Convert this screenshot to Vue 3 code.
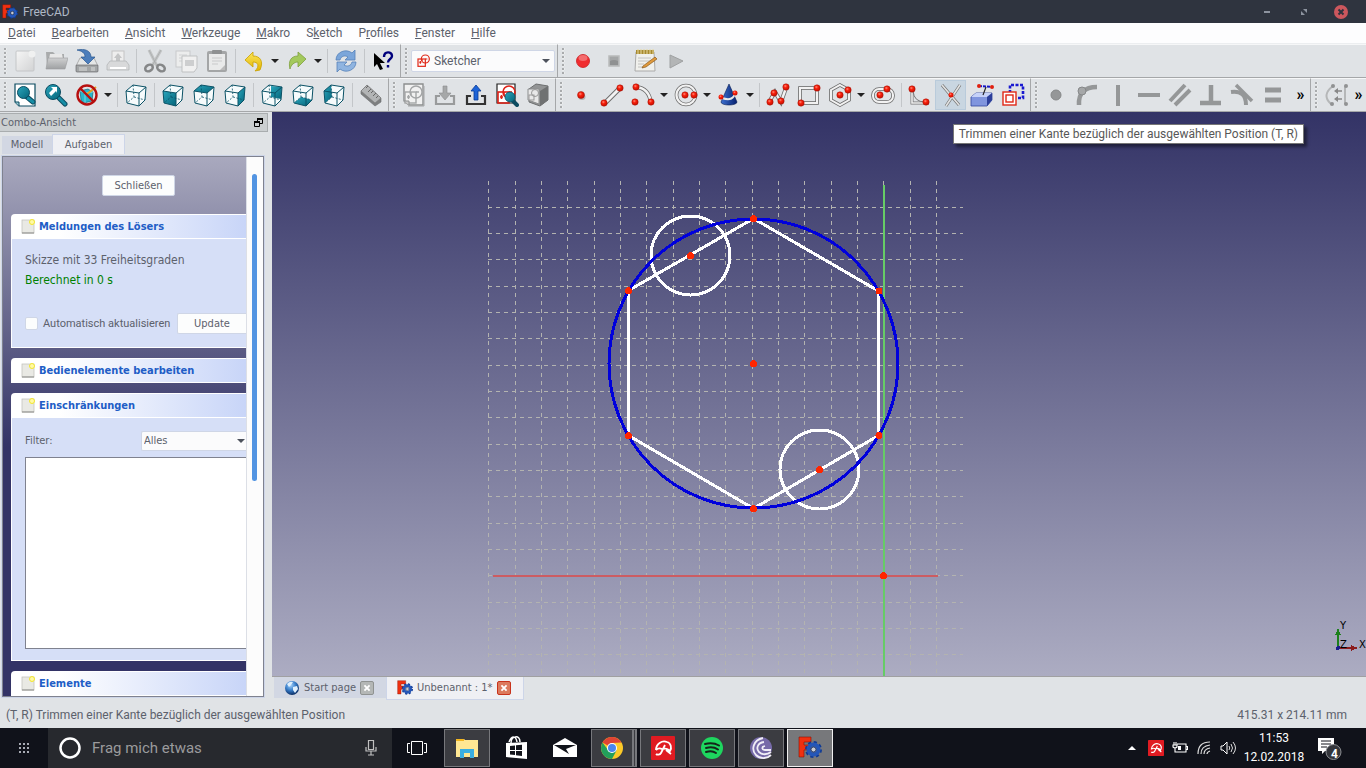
<script setup>
import { ref } from 'vue'

const tool = (icon, label, extra = {}) => ({ icon, label, ...extra })
const sep = { kind: 'sep' }
const drop = (label) => ({ kind: 'drop', label })
const more = { kind: 'more', label: 'Weitere Werkzeuge' }

const menus = [
  ['', 'D', 'atei'],
  ['', 'B', 'earbeiten'],
  ['', 'A', 'nsicht'],
  ['', 'W', 'erkzeuge'],
  ['', 'M', 'akro'],
  ['S', 'k', 'etch'],
  ['P', 'r', 'ofiles'],
  ['', 'F', 'enster'],
  ['', 'H', 'ilfe'],
]

const rows = [
  [
    {
      name: 'Datei',
      items: [
        tool('new', 'Neu'), tool('open', 'Öffnen'), tool('save', 'Speichern'), tool('print', 'Drucken'), sep,
        tool('cut', 'Ausschneiden'), tool('copy', 'Kopieren'), tool('paste', 'Einfügen'), sep,
        tool('undo', 'Rückgängig'), drop('Rückgängig-Liste'), tool('redo', 'Wiederholen'), drop('Wiederholen-Liste'), sep,
        tool('refresh', 'Aktualisieren'), sep, tool('whatsthis', 'Direkthilfe'),
      ],
    },
    { name: 'Arbeitsbereich', items: [{ kind: 'workbench' }] },
    {
      name: 'Makro',
      grow: true,
      items: [tool('record', 'Makro aufzeichnen'), tool('stop', 'Stopp'), tool('macros', 'Makros'), tool('play', 'Ausführen')],
    },
  ],
  [
    {
      name: 'Ansicht',
      items: [
        tool('fit', 'Alles einpassen'), tool('fitsel', 'Auswahl einpassen'), tool('style', 'Darstellung'), drop('Darstellungsart'), sep,
        tool('cube-axo', 'Axonometrisch'), sep,
        tool('cube-front', 'Vorne'), tool('cube-top', 'Oben'), tool('cube-right', 'Rechts'), sep,
        tool('cube-rear', 'Hinten'), tool('cube-bottom', 'Unten'), tool('cube-left', 'Links'), sep,
        tool('ruler', 'Abstand messen'),
      ],
    },
    {
      name: 'Skizze',
      items: [
        tool('sketch-new', 'Neue Skizze'), tool('sketch-edit', 'Skizze bearbeiten'), tool('sketch-leave', 'Skizze verlassen'),
        tool('sketch-view', 'Skizze anzeigen'), tool('sketch-map', 'Skizze zuordnen'),
      ],
    },
    {
      name: 'Geometrie',
      items: [
        tool('point', 'Punkt'), tool('line', 'Linie'), tool('arc', 'Bogen'), drop('Bögen'),
        tool('circle', 'Kreis'), drop('Kreise'), tool('conic', 'Kegelschnitt'), drop('Kegelschnitte'), sep,
        tool('polyline', 'Linienzug'), tool('rect', 'Rechteck'), tool('polygon', 'Polygon'), drop('Polygone'), tool('slot', 'Langloch'), sep,
        tool('fillet', 'Verrundung'), tool('trim', 'Trimmen', { active: true }), tool('external', 'Externe Geometrie'), tool('construction', 'Hilfsgeometrie'),
      ],
    },
    {
      name: 'Einschränkungen',
      grow: true,
      items: [
        tool('c-point', 'Koinzidenz'), tool('c-curve', 'Punkt auf Objekt'), tool('c-vert', 'Vertikal'), tool('c-hori', 'Horizontal'),
        tool('c-para', 'Parallel'), tool('c-perp', 'Rechtwinklig'), tool('c-tang', 'Tangential'), tool('c-equal', 'Gleich'), more,
      ],
    },
    { name: 'Hilfsmittel', items: [tool('sym', 'Elemente auswählen'), more] },
  ],
]

// Corners of the small view cube, shared by all view icons
const faces = {
  axo: '',
  front: '2,8 15,10 15,23 3,20',
  top: '2,8 9,2 22,4 15,10',
  right: '15,10 22,4 21,17 15,23',
  rear: '11,3 22,4 21,16 11,14',
  bottom: '3,20 10,14 21,17 15,23',
  left: '2,8 9,2 10,14 3,20',
}

const step = 26.33
const columns = Array.from({ length: 18 }, (_, i) => Math.floor(488.9 + i * step) + 0.5)
const lines = Array.from({ length: 18 }, (_, i) => Math.floor(207.2 + i * step) + 0.5)

const points = [
  [753.5, 218.5], [879, 291], [879, 435.5], [753.5, 508.5], [628.5, 435.5], [628.5, 290.5],
  [753.5, 363.5], [690.5, 255.5], [819.5, 469.5], [883.5, 575.5],
]

const apps = [
  { icon: 'explorer', label: 'Explorer', state: 'open' },
  { icon: 'store', label: 'Store', state: '' },
  { icon: 'mail', label: 'Mail', state: '' },
  { icon: 'chrome', label: 'Chrome', state: 'open stacked' },
  { icon: 'avira', label: 'Avira', state: 'open' },
  { icon: 'spotify', label: 'Spotify', state: 'open' },
  { icon: 'torrent', label: 'BitTorrent', state: 'open' },
  { icon: 'freecad', label: 'FreeCAD', state: 'open current' },
]

const tray = [
  ['chevron', 'Ausgeblendete Symbole'],
  ['avira', 'Avira'],
  ['battery', 'Akku'],
  ['wifi', 'WLAN'],
  ['volume', 'Lautstärke'],
]

const workbench = ref('Sketcher')
const filter = ref('Alles')
const autoUpdate = ref(false)
const query = ref('')
</script>

<template>
  <div class="screen">
    <svg class="sprite" width="0" height="0" aria-hidden="true">
      <defs>
        <radialGradient id="g-ball" cx=".4" cy=".35" r=".65">
          <stop offset="0" stop-color="#ff8a78" /><stop offset=".4" stop-color="#f8200c" /><stop offset="1" stop-color="#c80e00" />
        </radialGradient>
        <linearGradient id="g-page" x1="0" y1="0" x2="1" y2="1">
          <stop offset="0" stop-color="#f6f6f6" /><stop offset="1" stop-color="#d2d3d4" />
        </linearGradient>
        <linearGradient id="g-grey" x1="0" y1="0" x2="0" y2="1">
          <stop offset="0" stop-color="#cfd0d1" /><stop offset="1" stop-color="#9fa1a3" />
        </linearGradient>
        <linearGradient id="g-teal" x1="0" y1="0" x2="1" y2="1">
          <stop offset="0" stop-color="#2ba6bc" /><stop offset="1" stop-color="#04647a" />
        </linearGradient>
        <linearGradient id="g-yellow" x1="0" y1="0" x2="0" y2="1">
          <stop offset="0" stop-color="#fbe55c" /><stop offset="1" stop-color="#e2b400" />
        </linearGradient>
        <linearGradient id="g-cone" x1="0" y1="0" x2="1" y2="0">
          <stop offset="0" stop-color="#3c70d0" /><stop offset="1" stop-color="#06206e" />
        </linearGradient>
        <radialGradient id="g-globe" cx=".4" cy=".3" r=".7">
          <stop offset="0" stop-color="#a8d4fb" /><stop offset=".5" stop-color="#3a80cc" /><stop offset="1" stop-color="#0c2f66" />
        </radialGradient>
        <g id="ball"><circle r="3.200" fill="url(#g-ball)" stroke="#a01408" stroke-width=".5" /></g>
        <g id="sketch" fill="none">
          <rect x="3" y="9" width="11" height="11" /><circle cx="14" cy="9" r="6" /><path d="M5 14h3M6.500 12v4M9 9v3M14 9h3" />
        </g>
      </defs>

      <symbol v-for="(pts, face) in faces" :id="'cube-' + face" :key="face" viewBox="0 0 24 24">
        <path d="M2 8 9 2 22 4 21 17 15 23 3 20z" fill="#f6fbfc" />
        <polygon :points="pts" fill="url(#g-teal)" />
        <path d="M9 2 10 14 3 20M10 14 21 17" fill="none" stroke="#0b5266" stroke-width=".8" stroke-dasharray="2 1.500" />
        <path d="M2 8 9 2 22 4 21 17 15 23 3 20zM2 8 15 10 22 4M15 10V23" fill="none" stroke="#0b5266" stroke-width="1" stroke-linejoin="round" />
      </symbol>

      <symbol id="new" viewBox="0 0 24 24">
        <rect x="3" y="2" width="18" height="20" rx="1" fill="url(#g-page)" stroke="#c4c6c8" />
        <circle cx="19" cy="5" r="3.500" fill="#f0f1f1" />
      </symbol>
      <symbol id="open" viewBox="0 0 24 24">
        <path d="M2 3h7l2 2h9v14H3z" fill="#a9abac" /><path d="M6 5h12l1 5H5z" fill="#e8e8e8" />
        <path d="M4 9h20l-3 11H2z" fill="url(#g-grey)" stroke="#9a9c9d" stroke-width=".6" />
      </symbol>
      <symbol id="save" viewBox="0 0 24 24">
        <path d="M5 9h14l4 8H1z" fill="#e4e6e6" stroke="#888" stroke-width=".6" />
        <rect x="1" y="16" width="22" height="7" rx="1" fill="#a3a6a7" stroke="#5a5d5e" stroke-width=".6" />
        <path d="M4 19h8M4 21h8M17 18v4M19 18v4" stroke="#d9dada" />
        <path d="M2 1C10-1 16 2 16 8h4l-7 7-7-7h4C10 4 7 2 2 1z" fill="#4b7dbb" stroke="#2a5890" stroke-width=".7" />
      </symbol>
      <symbol id="print" viewBox="0 0 24 24">
        <rect x="6" y="2" width="12" height="12" fill="#eee" stroke="#c4c4c4" /><path d="M12 4l4 5h-2v3h-4V9H8z" fill="#c4c5c6" />
        <path d="M4 12h16l3 4v5H1v-5z" fill="#d8d9da" stroke="#b4b6b7" stroke-width=".8" /><path d="M4 19h16" stroke="#fff" stroke-width="2" />
      </symbol>
      <symbol id="cut" viewBox="0 0 24 24">
        <path d="M6 1 14 17M18 1 9 17" stroke="#c3c5c6" stroke-width="3" /><path d="M6 1 14 17M18 1 9 17" stroke="#a0a2a3" stroke-width=".6" />
        <g fill="none" stroke="#858788" stroke-width="2.500"><ellipse cx="6" cy="19" rx="4" ry="3" transform="rotate(-30 6 19)" /><ellipse cx="18" cy="19" rx="4" ry="3" transform="rotate(30 18 19)" /></g>
      </symbol>
      <symbol id="copy" viewBox="0 0 24 24">
        <rect x="2" y="2" width="14" height="16" fill="#eceded" stroke="#c8cacb" /><path d="M5 6h8M5 9h8M5 12h5" stroke="#d0d1d2" />
        <path d="M8 7h15v12l-3 4H8z" fill="#f0f0f0" stroke="#bfc1c2" /><rect x="11" y="11" width="9" height="6" fill="#cdcecf" />
      </symbol>
      <symbol id="paste" viewBox="0 0 24 24">
        <rect x="2" y="2" width="20" height="21" rx="2" fill="#a4a6a7" /><rect x="4" y="5" width="16" height="16" fill="#e9eaea" />
        <path d="M7 9h10M7 12h10M7 15h6" stroke="#c8c9ca" /><rect x="7" y="1" width="10" height="4" rx="1" fill="#8f9192" /><path d="m15 21 5-5v5z" fill="#bbb" />
      </symbol>
      <symbol id="undo" viewBox="0 0 24 24">
        <path d="M3 11 11 3v4c7 0 11 5 7 14l-5 1c5-5 3-9-2-9v5z" fill="url(#g-yellow)" stroke="#c9a100" stroke-width=".8" stroke-linejoin="round" />
      </symbol>
      <symbol id="redo" viewBox="0 0 24 24">
        <path d="M21 10 13 3v4C6 7 3 12 5 20c1-4 4-7 8-7v5z" fill="#a3c95c" stroke="#7da03c" stroke-width=".8" stroke-linejoin="round" />
      </symbol>
      <symbol id="refresh" viewBox="0 0 24 24">
        <path d="M2 11C2 3 12-1 18 4l3-3v10h-10l3-3C11 6 7 7 6 11z" fill="#7ba6da" stroke="#5681b9" stroke-width=".8" />
        <path d="M22 13c0 8-10 12-16 7l-3 3V13h10l-3 3c3 2 7 1 8-3z" fill="#8fb4e0" stroke="#5681b9" stroke-width=".8" />
      </symbol>
      <symbol id="whatsthis" viewBox="0 0 24 24">
        <path d="M3 4v14l3-3 3 6 3-1-3-6h5z" fill="#000" /><path d="M13 8c0-6 8-6 8-1 0 3-4 3-4 6.500M17 16v2.500" fill="none" stroke="#00007c" stroke-width="2.400" />
      </symbol>
      <symbol id="record" viewBox="0 0 24 24"><circle cx="12" cy="12" r="6.500" fill="#f02d30" stroke="#cc1a1e" stroke-width=".8" /><ellipse cx="12" cy="9" rx="4.500" ry="3" fill="#fff" opacity=".3" /></symbol>
      <symbol id="stop" viewBox="0 0 24 24"><rect x="7" y="7" width="10" height="10" fill="#a4a6a7" stroke="#b8babb" stroke-width="1.500" /><path d="M8 12q4-2 8 0v4H8z" fill="#8f9192" /></symbol>
      <symbol id="macros" viewBox="0 0 24 24">
        <path d="M3 3h18l1 19H2z" fill="#f0f0ec" stroke="#aaa" /><path d="M3 1h18v4H3z" fill="#a78a2f" /><path d="M5 0v5M8 0v5M11 0v5M14 0v5M17 0v5M20 0v5" stroke="#e8d9a0" />
        <path d="M5 9h13M5 12h13M5 15h6M5 18h6" stroke="#b5b5b5" stroke-width=".8" /><path d="m10 17 12-9 2 2-11 8-4 1z" fill="#e09a3c" stroke="#7a4a10" stroke-width=".6" />
      </symbol>
      <symbol id="play" viewBox="0 0 24 24"><path d="M6 6v13l13-7z" fill="#b3b5b6" stroke="#9fa1a2" /></symbol>

      <symbol id="fit" viewBox="0 0 24 24">
        <path d="M2 1h20v22H6l-4-4z" fill="#fff" stroke="#0b4b60" stroke-width="1.200" /><path d="M2 19h4v4" fill="#9ccbd6" stroke="#0b4b60" />
        <path d="m14 14 6 5" stroke="#0b4b60" stroke-width="5" stroke-linecap="round" /><path d="m15 15 5 4" stroke="#178ea6" stroke-width="3" stroke-linecap="round" />
        <circle cx="10.500" cy="9.500" r="6" fill="url(#g-teal)" stroke="#0b4b60" />
      </symbol>
      <symbol id="fitsel" viewBox="0 0 24 24">
        <path d="m14 14 7 7" stroke="#0b4b60" stroke-width="5" stroke-linecap="round" /><path d="m15 15 6 6" stroke="#178ea6" stroke-width="3" stroke-linecap="round" />
        <circle cx="9" cy="9" r="7.500" fill="url(#g-teal)" stroke="#0b4b60" /><path d="M13 4H7l2 2-4 4 2 3 5-5 1 2z" fill="#fff" />
      </symbol>
      <symbol id="style" viewBox="0 0 24 24">
        <path d="M5 8 13 6 18 9 17 18 9 20 6 17z" fill="#27b6cb" stroke="#0b5266" stroke-width=".6" /><path d="m5 8 5 2v10M10 10l8-1" fill="none" stroke="#7bd4e2" />
        <path d="m12 11 9-7" stroke="#e8a020" stroke-width="2" /><circle cx="12" cy="12" r="9.500" fill="none" stroke="#b70f0f" stroke-width="2.400" /><path d="M5 5 19 19" stroke="#b70f0f" stroke-width="2.400" />
      </symbol>
      <symbol id="ruler" viewBox="0 0 24 24">
        <path d="M2 8 8 2 22 15v4l-6 4L2 11z" fill="#7d7f80" stroke="#6a6c6d" stroke-width=".6" /><path d="M2 8 8 2l14 13-6 5z" fill="#b2b4b5" stroke="#777" stroke-width=".6" />
        <path d="m9 3-2 2M12 6l-3 3M14 8l-2 2M17 10l-3 3M19 13l-2 2" stroke="#666" />
      </symbol>

      <symbol id="sketch-new" viewBox="0 0 24 24">
        <path d="M2 1h19v21H7l-5-4z" fill="#f1f1f1" stroke="#8c8e8f" stroke-width="1.400" /><path d="M22 3v20H6" fill="none" stroke="#a4a6a7" />
        <use href="#sketch" stroke="#a3a5a6" stroke-width="1.400" /><path d="M2 18h5v4" fill="#ccc" stroke="#8c8e8f" />
      </symbol>
      <symbol id="sketch-edit" viewBox="0 0 24 24">
        <path d="M7 13H3v8h18v-8h-4" fill="none" stroke="#999b9c" stroke-width="2.200" /><path d="M10 3h4v7h4l-6 7-6-7h4z" fill="#a6a8a9" stroke="#8a8c8d" stroke-width=".6" />
      </symbol>
      <symbol id="sketch-leave" viewBox="0 0 24 24">
        <path d="M7 13H3v8h18v-8h-4" fill="none" stroke="#333" stroke-width="2.200" /><path d="M12 2 17 8h-3v9h-4V8H7z" fill="#1c63d8" stroke="#093a94" stroke-width=".8" />
      </symbol>
      <symbol id="sketch-view" viewBox="0 0 24 24">
        <path d="M2 1h18v19H2z" fill="#fff" stroke="#222" stroke-width="1.200" /><use href="#sketch" stroke="#dd2218" stroke-width="1.600" />
        <path d="m17 17 5 5" stroke="#0b4b60" stroke-width="4" stroke-linecap="round" /><circle cx="15" cy="14" r="5" fill="url(#g-teal)" stroke="#0b5266" stroke-width=".8" />
      </symbol>
      <symbol id="sketch-map" viewBox="0 0 24 24">
        <path d="M3 6 10 1l12 2v14l-8 6-11-4z" fill="#929495" stroke="#6d6f70" /><path d="m14 8 8-5v14l-8 6z" fill="#6f7172" />
        <path d="M2 6h11v15l-11-4z" fill="#e8e8e8" stroke="#8c8e8f" /><rect x="3" y="12" width="5" height="5" fill="none" stroke="#999" /><circle cx="9" cy="10" r="3.500" fill="none" stroke="#999" />
      </symbol>

      <symbol id="point" viewBox="0 0 24 24"><ellipse cx="13" cy="14" rx="3.500" ry="3" fill="#888" opacity=".5" /><circle cx="12" cy="12" r="3.500" fill="url(#g-ball)" stroke="#a01408" stroke-width=".5" /></symbol>
      <symbol id="line" viewBox="0 0 24 24">
        <path d="M5 20 20 5" stroke="#6c6c6c" stroke-width="5" /><path d="M5 20 20 5" stroke="#f2f2f2" stroke-width="3" /><use href="#ball" x="4" y="20" /><use href="#ball" x="20" y="5" />
      </symbol>
      <symbol id="arc" viewBox="0 0 24 24">
        <path d="M5 4q13 1 15 16" fill="none" stroke="#6c6c6c" stroke-width="4" /><path d="M5 4q13 1 15 16" fill="none" stroke="#f2f2f2" stroke-width="2.400" />
        <use href="#ball" x="5" y="4" /><use href="#ball" x="4" y="19" /><use href="#ball" x="20" y="19" />
      </symbol>
      <symbol id="circle" viewBox="0 0 24 24">
        <circle cx="12" cy="12" r="9.500" fill="none" stroke="#6c6c6c" stroke-width="3.600" /><circle cx="12" cy="12" r="9.500" fill="none" stroke="#f2f2f2" stroke-width="2.200" />
        <use href="#ball" x="11" y="12" /><use href="#ball" x="20" y="12" />
      </symbol>
      <symbol id="conic" viewBox="0 0 24 24">
        <path d="M12 1 20 19c0 4-16 4-16 0z" fill="url(#g-cone)" stroke="#061c52" stroke-width=".6" /><path d="M5 15q12 4 13-6" fill="none" stroke="#e8e8e8" stroke-width="2" />
        <circle cx="4" cy="14" r="2.500" fill="url(#g-ball)" /><circle cx="18" cy="10" r="2.500" fill="url(#g-ball)" />
      </symbol>
      <symbol id="polyline" viewBox="0 0 24 24">
        <path d="M3 19 9 9l6 10 5-14" fill="none" stroke="#6c6c6c" stroke-width="4" /><path d="M3 19 9 9l6 10 5-14" fill="none" stroke="#f2f2f2" stroke-width="2.400" />
        <use href="#ball" x="4" y="19" /><use href="#ball" x="8" y="10" /><use href="#ball" x="15" y="18" /><use href="#ball" x="20" y="4" />
      </symbol>
      <symbol id="rect" viewBox="0 0 24 24">
        <rect x="3" y="5" width="17" height="15" fill="none" stroke="#6c6c6c" stroke-width="3.600" /><rect x="3" y="5" width="17" height="15" fill="none" stroke="#f2f2f2" stroke-width="2" />
        <use href="#ball" x="4" y="20" /><use href="#ball" x="20" y="5" />
      </symbol>
      <symbol id="polygon" viewBox="0 0 24 24">
        <path d="M12 2 21 7v10l-9 5-9-5V7z" fill="none" stroke="#6c6c6c" stroke-width="3.600" /><path d="M12 2 21 7v10l-9 5-9-5V7z" fill="none" stroke="#f2f2f2" stroke-width="2" />
        <use href="#ball" x="12" y="12" /><use href="#ball" x="20" y="7" />
      </symbol>
      <symbol id="slot" viewBox="0 0 24 24">
        <rect x="2" y="6" width="20" height="13" rx="6" fill="none" stroke="#6c6c6c" stroke-width="3.600" /><rect x="2" y="6" width="20" height="13" rx="6" fill="none" stroke="#f2f2f2" stroke-width="2" />
        <use href="#ball" x="9" y="12" /><use href="#ball" x="16" y="6" />
      </symbol>
      <symbol id="fillet" viewBox="0 0 24 24">
        <path d="M4 4v16h17" fill="none" stroke="#777" stroke-width="3" /><path d="M4 4v16h17" fill="none" stroke="#eee" stroke-width="1.600" /><path d="M5 8q1 11 12 11" fill="none" stroke="#777" />
        <use href="#ball" x="4" y="6" /><use href="#ball" x="18" y="19" />
      </symbol>
      <symbol id="trim" viewBox="0 0 24 24">
        <path d="M3 2 20 22M21 2 7 23" stroke="#777" stroke-width="3" /><path d="M3 2 20 22M21 2 7 23" stroke="#e2e2e2" stroke-width="1.600" /><circle cx="12" cy="12" r="2.500" fill="url(#g-ball)" />
      </symbol>
      <symbol id="external" viewBox="0 0 24 24">
        <path d="M1 14 6 10h16v7l-5 6H1z" fill="#8095de" stroke="#3348a0" stroke-width=".8" /><path d="M1 14 6 10h16l-5 4z" fill="#c6d2f8" /><path d="M17 14l5-4v7l-5 6z" fill="#2c3f9a" />
        <path d="M9 3l13 1" stroke="#1414c8" stroke-width="2" stroke-dasharray="3 1" /><path d="m16 4-3 8" stroke="#222" stroke-width="1.200" /><circle cx="9" cy="3" r="2" fill="#e02010" /><circle cx="22" cy="4" r="2" fill="#e02010" />
      </symbol>
      <symbol id="construction" viewBox="0 0 24 24">
        <path d="M9 10V2h13v13h-6" fill="none" stroke="#1a1ad0" stroke-width="2.600" stroke-dasharray="3 1.500" />
        <rect x="2" y="9" width="13" height="13" fill="#fff" stroke="#e02818" stroke-width="1.400" /><rect x="5" y="12" width="7" height="7" fill="none" stroke="#e02818" stroke-width="1.400" />
      </symbol>

      <symbol id="c-point" viewBox="0 0 24 24"><circle cx="12" cy="12" r="5" fill="#959798" stroke="#868889" /></symbol>
      <symbol id="c-curve" viewBox="0 0 24 24"><path d="M4 22Q3 4 22 4" fill="none" stroke="#959798" stroke-width="4.500" /><circle cx="7" cy="8" r="4" fill="#a5a7a8" stroke="#868889" /></symbol>
      <symbol id="c-vert" viewBox="0 0 24 24"><path d="M12 2v21" stroke="#959798" stroke-width="4" /></symbol>
      <symbol id="c-hori" viewBox="0 0 24 24"><path d="M1 12h22" stroke="#959798" stroke-width="4" /></symbol>
      <symbol id="c-para" viewBox="0 0 24 24"><path d="M2 18 17 2M7 22 22 7" stroke="#959798" stroke-width="4" /></symbol>
      <symbol id="c-perp" viewBox="0 0 24 24"><path d="M12 2v17M1 20h21" fill="none" stroke="#959798" stroke-width="4.500" /></symbol>
      <symbol id="c-tang" viewBox="0 0 24 24"><path d="M6 2 22 18" stroke="#959798" stroke-width="3.500" /><path d="M1 9q15-2 15 13" fill="none" stroke="#959798" stroke-width="4" /></symbol>
      <symbol id="c-equal" viewBox="0 0 24 24"><path d="M4 7h16M4 17h16" stroke="#959798" stroke-width="5" /></symbol>
      <symbol id="sym" viewBox="0 0 24 24">
        <path d="M9 3Q-3 12 7 21M21 3v18" fill="none" stroke="#b5b7b8" stroke-width="2" /><g fill="#909293"><circle cx="9" cy="3" r="2" /><circle cx="8" cy="21" r="2" /><circle cx="22" cy="3" r="2" /><circle cx="22" cy="21" r="2" /></g>
        <path d="M18 8h-5M18 16h-5" stroke="#888" stroke-width="1.600" /><path d="m14 5-4 3 4 3zM14 13l-4 3 4 3z" fill="#888" />
      </symbol>

      <symbol id="freecad" viewBox="0 0 24 24">
        <path d="M1 1h12v5H6v3h6v5H6v7H1z" fill="#f03010" stroke="#8a1204" stroke-width=".6" />
        <circle cx="15.500" cy="13.500" r="7" fill="none" stroke="#0f3a94" stroke-width="3" stroke-dasharray="3 2.500" />
        <circle cx="15.500" cy="13.500" r="5" fill="none" stroke="#2456b8" stroke-width="4" /><circle cx="15.500" cy="13.500" r="2.500" fill="#c9ccd2" stroke="#0b2560" stroke-width=".8" />
      </symbol>
      <symbol id="globe" viewBox="0 0 16 16">
        <circle cx="8" cy="8" r="7" fill="url(#g-globe)" /><path d="M3 4q3-3 6-2l-2 3-2 2zM9 7l4-1 1 3-3 4-2-3z" fill="#e0f0fd" />
      </symbol>
      <symbol id="closetab" viewBox="0 0 14 14"><path d="m4 4 6 6M10 4l-6 6" stroke="#fff" stroke-width="2.200" /></symbol>
      <symbol id="note" viewBox="0 0 14 15">
        <rect x="1" y="1" width="12" height="13" fill="#e9e9e4" stroke="#c4c4be" stroke-width=".8" /><path d="M1 14h12" stroke="#8b8b88" /><circle cx="11" cy="3" r="2.500" fill="#fff9a8" stroke="#f4e62c" />
      </symbol>

      <symbol id="explorer" viewBox="0 0 24 24"><path d="M1 3h8l1 1h13v17H1z" fill="#ffe793" /><path d="M1 3h8v2H1z" fill="#f3b620" /><path d="M5 13h14v9h-4v-5h-6v5H5z" fill="#3aaee0" /></symbol>
      <symbol id="store" viewBox="0 0 24 24">
        <path d="M2 7 23 6v17L2 21z" fill="#fff" /><path d="M7 7c0-7 9-9 9-1M5 6C8-1 12 0 13 6" fill="none" stroke="#fff" stroke-width="1.500" /><path d="m6 10 5-.6V14H6zM12 9.300l6-.6V14h-6zM6 15h5v4l-5-.6zM12 15h6v5l-6-.7z" fill="#11131a" />
      </symbol>
      <symbol id="mail" viewBox="0 0 24 24"><path d="M0 9 12 2l12 7v12H0z" fill="#fff" /><path d="M1 9h22l-10 4 3 5z" fill="#11131a" /></symbol>
      <symbol id="chrome" viewBox="0 0 24 24">
        <circle cx="12" cy="12" r="11" fill="#fbc928" /><path d="M12 12 2.500 6.500A11 11 0 0 1 21.500 6.500L12 7z" fill="#df4434" /><path d="M2.500 6.500A11 11 0 0 0 12 23l4.500-8.500L12 12l-4 2z" fill="#22a05b" />
        <circle cx="12" cy="12" r="5" fill="#fff" /><circle cx="12" cy="12" r="4" fill="#4a86ee" />
      </symbol>
      <symbol id="avira" viewBox="0 0 24 24">
        <rect width="24" height="24" rx="1" fill="#e01b22" />
        <path d="M5 14C5 8 11 4 16 6c4 1 5 6 3 9-2-2-4-3-6-2M5 14c2-2 4-2 6-1M14 9l-4 8c-1 2-4 2-5 1M15 14l5 4" fill="none" stroke="#fff" stroke-width="1.800" stroke-linejoin="round" />
      </symbol>
      <symbol id="spotify" viewBox="0 0 24 24"><circle cx="12" cy="12" r="11" fill="#1ed65f" /><path d="M5 8q8-2 14 1.500M6 12q7-2 12 1.500M6 16q6-2 10 1" fill="none" stroke="#14251a" stroke-width="2" stroke-linecap="round" /></symbol>
      <symbol id="torrent" viewBox="0 0 24 24">
        <circle cx="12" cy="12" r="11" fill="#766aa8" /><path d="M14 2C4 4 2 14 7 19s12 3 15 0M15 6C8 7 7 13 10 16s8 3 12 0M16 10c-4 1-3 4 0 4h6" fill="none" stroke="#f0eef6" stroke-width="1.800" />
      </symbol>
      <symbol id="chevron" viewBox="0 0 16 16"><path d="m4 10 4-4 4 4z" fill="#fff" /></symbol>
      <symbol id="battery" viewBox="0 0 16 16"><path d="M5 4h9v8H5M14 6.500h1.500v3H14M2 2v3M4 2v3M1 5h4v2q-2 2-4 0zM3 8v4h3" fill="none" stroke="#fff" stroke-width="1.100" /><path d="M6 6h3v4H6z" fill="#fff" /></symbol>
      <symbol id="wifi" viewBox="0 0 16 16"><path d="M2 14Q2 2 14 2M5 14q0-8 9-9M8 14q0-5 6-6M11 14q0-2 3-3" fill="none" stroke="#ddd" stroke-width="1.200" /></symbol>
      <symbol id="volume" viewBox="0 0 16 16"><path d="M1 6h2l4-4v12l-4-4H1z" fill="none" stroke="#fff" /><path d="M9 6q1.500 2 0 4M11 4q3 4 0 8M13 2q5 6 0 12" fill="none" stroke="#ddd" /></symbol>
    </svg>

    <header class="titlebar">
      <svg class="i16"><use href="#freecad" /></svg>
      <h1>FreeCAD</h1>
      <button type="button" aria-label="Minimieren"><svg class="i16" viewBox="0 0 16 16"><path d="M5 7h6v2H5z" fill="#8d939f" /></svg></button>
      <button type="button" aria-label="Wiederherstellen"><svg class="i16" viewBox="0 0 16 16"><path d="M7 5h4v4zM5 7v4h4z" fill="#8d939f" /></svg></button>
      <button type="button" aria-label="Schließen">
        <svg class="i16" viewBox="0 0 16 16"><circle cx="8" cy="8" r="7" fill="#cc575d" /><path d="m5.500 5.500 5 5M10.500 5.500l-5 5" stroke="#2f343f" stroke-width="2" /></svg>
      </button>
    </header>

    <nav class="menubar">
      <a v-for="m in menus" :key="m[2]" href="#">{{ m[0] }}<u>{{ m[1] }}</u>{{ m[2] }}</a>
    </nav>

    <div v-for="(row, r) in rows" :key="r" class="toolrow">
      <div v-for="bar in row" :key="bar.name" class="toolbar" :class="{ grow: bar.grow }" role="toolbar" :aria-label="bar.name">
        <span class="handle" />
        <template v-for="(item, i) in bar.items" :key="i">
          <span v-if="item.kind === 'sep'" class="sep" />
          <button v-else-if="item.kind === 'drop'" type="button" class="drop" :aria-label="item.label"><span class="caret" /></button>
          <button v-else-if="item.kind === 'more'" type="button" class="more" :aria-label="item.label">»</button>
          <label v-else-if="item.kind === 'workbench'" class="combo workbench">
            <svg class="i16" viewBox="0 0 24 24"><use href="#sketch" stroke="#e02818" stroke-width="1.800" /></svg>
            <select v-model="workbench" aria-label="Arbeitsbereich"><option>Sketcher</option></select>
            <span class="caret" />
          </label>
          <button v-else type="button" class="tool" :class="{ active: item.active }" :aria-label="item.label">
            <svg><use :href="'#' + item.icon" /></svg>
          </button>
        </template>
      </div>
    </div>

    <main class="work">
      <aside class="dock">
        <div class="dock-title">
          <h2>Combo-Ansicht</h2>
          <button type="button" aria-label="Abdocken">
            <svg width="9" height="9" viewBox="0 0 9 9"><path d="M3.500 3V1.500h5v4H6M.5 4.500h5v4h-5z" fill="none" stroke="#000" /><path d="M3 1h6M0 4h6" stroke="#000" stroke-width="2" /></svg>
          </button>
        </div>
        <div class="dock-tabs">
          <button type="button">Modell</button>
          <button type="button" class="selected">Aufgaben</button>
        </div>
        <div class="frame">
          <div class="tasks">
            <button type="button" class="push close">Schließen</button>

            <section class="box">
              <h3><svg><use href="#note" /></svg>Meldungen des Lösers</h3>
              <div class="body solver">
                <p>Skizze mit 33 Freiheitsgraden</p>
                <p class="ok">Berechnet in 0 s</p>
                <div class="update">
                  <label><input v-model="autoUpdate" type="checkbox" />Automatisch aktualisieren</label>
                  <button type="button" class="push">Update</button>
                </div>
              </div>
            </section>

            <section class="box">
              <h3><svg><use href="#note" /></svg>Bedienelemente bearbeiten</h3>
            </section>

            <section class="box">
              <h3><svg><use href="#note" /></svg>Einschränkungen</h3>
              <div class="body constraints">
                <div class="filter">
                  <label for="filter">Filter:</label>
                  <div class="combo">
                    <select id="filter" v-model="filter"><option>Alles</option></select>
                    <span class="caret" />
                  </div>
                </div>
                <div class="list" role="listbox" aria-label="Einschränkungen" />
              </div>
            </section>

            <section class="box">
              <h3><svg><use href="#note" /></svg>Elemente</h3>
            </section>
          </div>
          <div class="scrollbar"><span class="thumb" /></div>
        </div>
      </aside>

      <div class="editor">
        <div class="viewport">
          <svg class="scene" viewBox="272 112 1094 564" preserveAspectRatio="xMidYMid slice" shape-rendering="crispEdges">
            <g stroke="#b3b3b0" stroke-dasharray="4 4">
              <line v-for="x in columns" :key="x" :x1="x" y1="181" :x2="x" y2="676" />
              <line v-for="y in lines" :key="y" x1="488" :y1="y" x2="963" :y2="y" />
            </g>
            <path d="M493 576H938" stroke="#cc5c62" stroke-width="2" />
            <path d="M884 185V676" stroke="#66cc66" stroke-width="2" />
            <g fill="none" stroke="#fff" stroke-width="3">
              <path d="M753.500 218.500 878.500 291V435.500L753.500 508.500 628.500 435.500V290.500z" />
              <circle cx="690.500" cy="255.500" r="39.500" />
              <circle cx="819.500" cy="469.500" r="39.500" />
            </g>
            <circle cx="753.500" cy="363.500" r="144.500" fill="none" stroke="#0000dc" stroke-width="3" />
            <circle v-for="(p, i) in points" :key="i" :cx="p[0]" :cy="p[1]" r="3.500" fill="#ff2600" />
            <path d="M1338 648V629" stroke="#1c801c" stroke-width="2" /><path d="m1335 635 3-6 3 6z" fill="#1c801c" />
            <path d="M1338 648h19" stroke="#8c1c1c" stroke-width="2" /><path d="m1351 645 6 3-6 3z" fill="#8c1c1c" /><circle cx="1338" cy="648" r="2" fill="#1c1c8c" />
            <g class="axis"><text x="1340" y="629">Y</text><text x="1340" y="648">Z</text><text x="1359" y="648">X</text></g>
          </svg>
          <div class="tooltip" role="tooltip">Trimmen einer Kante bezüglich der ausgewählten Position (T, R)</div>
        </div>
        <div class="doc-tabs">
          <div class="doc">
            <svg class="i16"><use href="#globe" /></svg><span>Start page</span>
            <button type="button" aria-label="Start page schließen"><svg><use href="#closetab" /></svg></button>
          </div>
          <div class="doc selected">
            <svg class="i16"><use href="#freecad" /></svg><span>Unbenannt : 1*</span>
            <button type="button" aria-label="Unbenannt schließen"><svg><use href="#closetab" /></svg></button>
          </div>
        </div>
      </div>
    </main>

    <footer class="status">
      <span>(T, R) Trimmen einer Kante bezüglich der ausgewählten Position</span>
      <span>415.31 x 214.11 mm</span>
    </footer>

    <div class="taskbar">
      <button type="button" class="start" aria-label="Start">
        <svg width="12" height="12" viewBox="0 0 12 12"><path d="M1 2h10M1 6h10M1 10h10" stroke="#a8abb4" stroke-width="2" stroke-dasharray="2 2" /></svg>
      </button>
      <label class="search">
        <svg width="22" height="22" viewBox="0 0 22 22"><circle cx="11" cy="11" r="9.500" fill="none" stroke="#fff" stroke-width="2.500" /></svg>
        <input v-model="query" type="text" placeholder="Frag mich etwas" aria-label="Suche" />
        <svg width="12" height="18" viewBox="0 0 12 18"><path d="M3.500 1.500h5v9h-5zM1 8v4h10V8M6 12v4M3 16h6" fill="none" stroke="#c0c0c0" stroke-width="1.200" /></svg>
      </label>
      <button type="button" class="taskview" aria-label="Aktive Anwendungen">
        <svg width="20" height="14" viewBox="0 0 20 14"><path d="M4.500.5h11v13h-11zM3 2.500H.5v9H3M17 2.500h2.500v9H17" fill="none" stroke="#fff" /></svg>
      </button>
      <button v-for="a in apps" :key="a.icon" type="button" class="app" :class="a.state" :aria-label="a.label">
        <svg><use :href="'#' + a.icon" /></svg>
      </button>
      <div class="tray">
        <button v-for="t in tray" :key="t[0]" type="button" :aria-label="t[1]"><svg class="i16"><use :href="'#' + t[0]" /></svg></button>
        <div class="clock"><time>11:53</time><time>12.02.2018</time></div>
        <button type="button" class="notes" aria-label="4 Benachrichtigungen">
          <svg width="24" height="24" viewBox="0 0 24 24">
            <path d="M0 2h16v13H7l-3 3v-3H0z" fill="#fff" /><path d="M3 5h10M3 8h10M3 11h6" stroke="#11131a" /><circle cx="15.500" cy="16" r="7.500" fill="#33353b" stroke="#8b8d92" />
          </svg>
          <span>4</span>
        </button>
      </div>
    </div>
  </div>
</template>

<style>
body {
  margin: 0;
}
</style>

<style scoped>
.screen {
  display: flex;
  flex-direction: column;
  height: 100vh;
  overflow: hidden;
  background: #e0e3e6;
  color: #5c616c;
  font: 12px/16px Roboto, 'Noto Sans', sans-serif;
}

.sprite {
  position: absolute;
}

button {
  display: flex;
  align-items: center;
  justify-content: center;
  padding: 0;
  border: 0;
  background: none;
  color: inherit;
  font: inherit;
}

h1,
h2,
h3,
p {
  margin: 0;
  font: inherit;
}

.i16 {
  width: 16px;
  height: 16px;
  flex: none;
}

.titlebar {
  display: flex;
  align-items: center;
  height: 23px;
  padding: 0 6px 0 2px;
  background: #2f343f;
  color: #afb8c5;
}

.titlebar h1 {
  flex: 1;
  padding-left: 5px;
}

.titlebar button {
  width: 37px;
  height: 20px;
}

.titlebar button:last-child {
  width: 38px;
}

.menubar {
  display: flex;
  align-items: center;
  gap: 16px;
  height: 20px;
  padding: 0 8px;
  background: #fdfdfe;
  border-bottom: 1px solid #eceef0;
}

.menubar a {
  color: inherit;
  text-decoration: none;
}

.toolrow {
  display: flex;
  height: 34px;
}

.toolbar {
  display: flex;
  align-items: center;
  box-sizing: border-box;
  height: 34px;
  padding-right: 2px;
  border-right: 1px solid #a5a7a9;
  border-top: 1px solid #f6f7f8;
  border-bottom: 1px solid #a5a7a9;
}

.toolbar.grow {
  flex: 1;
}

.toolbar:last-child {
  padding-right: 0;
  border-right: 0;
}

.handle {
  width: 3px;
  height: 26px;
  margin: 0 2px 0 4px;
  background: radial-gradient(circle at 1px 1px, #a9abad 1px, #fafafa 1px, transparent 2px) 0 0 / 3px 4px;
}

.sep {
  width: 1px;
  height: 24px;
  margin: 0 2px 0 3px;
  background: #c3c6c9;
}

.tool {
  width: 31px;
  height: 30px;
}

.tool.active {
  background: #c9d6e1;
  box-shadow: inset 0 0 0 1px #b9cbdb;
}

.tool svg {
  width: 24px;
  height: 24px;
}

.drop {
  width: 12px;
  height: 30px;
}

.drop .caret {
  border-top-color: #222;
}

.caret {
  border: 4px solid transparent;
  border-top-color: #4d525c;
  border-bottom: 0;
}

.more {
  width: 15px;
  margin-left: auto;
  color: #000;
  font-weight: 700;
  font-size: 16px;
}

.combo {
  display: flex;
  align-items: center;
  box-sizing: border-box;
  height: 20px;
  background: #fbfbfc;
  border: 1px solid #cfd6e6;
  border-radius: 2px;
}

.combo select {
  flex: 1;
  min-width: 0;
  padding: 0;
  border: 0;
  background: none;
  color: inherit;
  font: inherit;
  appearance: none;
}

.combo .caret {
  margin-right: 4px;
}

.workbench {
  width: 144px;
  height: 22px;
  margin-left: 1px;
  padding-left: 4px;
  gap: 2px;
}

.work {
  display: flex;
  flex: 1;
  min-height: 0;
}

.dock {
  display: flex;
  flex-direction: column;
  width: 272px;
  font: 11px/16px 'DejaVu Sans Condensed', 'DejaVu Sans', sans-serif;
}

.dock-title {
  display: flex;
  align-items: center;
  justify-content: space-between;
  box-sizing: border-box;
  height: 19px;
  margin: 1px 4px 0 0;
  padding: 0 4px 0 1px;
  background: #cbcfd1;
  border: 1px solid #a9adaf;
  border-left: 0;
}

.dock-tabs {
  display: flex;
  align-items: flex-end;
  height: 22px;
  padding-left: 2px;
}

.dock-tabs button {
  height: 18px;
  width: 50px;
  background: #d2d7e3;
}

.dock-tabs .selected {
  box-sizing: border-box;
  width: 73px;
  height: 20px;
  background: #eff0f4;
  border: 1px solid #cdd5e8;
  border-bottom: 0;
}

.frame {
  display: flex;
  flex: 1;
  min-height: 0;
  margin: 2px 8px 4px 2px;
  border: 1px solid #7f828f;
  outline: 1px solid #cdd5e8;
}

.tasks {
  display: flex;
  flex: 1;
  flex-direction: column;
  gap: 10px;
  min-width: 0;
  overflow: hidden;
  padding: 18px 0 0 8px;
  background: linear-gradient(#a9a9be, #333366 290px);
}

.push {
  height: 21px;
  border: 1px solid #cfd6e6;
  border-radius: 2px;
  background: #fcfdfd;
}

.close {
  flex: none;
  box-sizing: border-box;
  width: 73px;
  margin: 0 0 8px 91px;
}

.box {
  flex: none;
}

.box h3 {
  display: flex;
  align-items: center;
  gap: 4px;
  box-sizing: border-box;
  height: 25px;
  padding-left: 9px;
  background: linear-gradient(90deg, #fff 20%, #c8d5f8);
  border: 1px solid #fff;
  border-right: 0;
  border-radius: 4px 0 0 0;
  color: #215dc6;
  font-weight: 700;
}

.box h3 svg {
  width: 14px;
  height: 15px;
}

.body {
  box-sizing: border-box;
  background: #d6dff7;
  border: 1px solid #fff;
  border-top: 0;
  border-right: 0;
  padding-left: 13px;
}

.solver {
  height: 109px;
  padding-top: 11px;
  font-size: 12px;
  line-height: 20px;
}

.ok {
  color: #008000;
}

.update {
  display: flex;
  justify-content: space-between;
  align-items: center;
  margin-top: 23px;
  font-size: 11px;
}

.update label {
  display: flex;
  align-items: center;
  gap: 5px;
  font: 11px/16px Roboto, 'Noto Sans', sans-serif;
}

.update input {
  width: 13px;
  height: 13px;
  margin: 0;
  appearance: none;
  background: #fcfdfd;
  border: 1px solid #cfd6e6;
  border-radius: 2px;
}

.update .push {
  box-sizing: border-box;
  width: 69px;
  border-right: 0;
  border-radius: 2px 0 0 2px;
}

.constraints {
  height: 243px;
  padding-top: 13px;
}

.filter {
  display: flex;
  align-items: center;
  justify-content: space-between;
}

.filter .combo {
  width: 105px;
  border-right: 0;
  border-radius: 2px 0 0 2px;
}

.filter select {
  padding-left: 2px;
}

.filter .combo .caret {
  margin-right: 1px;
}

.list {
  box-sizing: border-box;
  height: 192px;
  margin-top: 6px;
  background: #fff;
  border: 1px solid #7f828f;
  border-right: 0;
}

.scrollbar {
  display: flex;
  width: 16px;
  background: #fcfcfc;
  border-left: 1px solid #dcdfe6;
}

.thumb {
  width: 5px;
  height: 57%;
  margin: 17px 0 0 5px;
  border-radius: 3px;
  background: #5294e2;
}

.editor {
  display: flex;
  flex: 1;
  flex-direction: column;
  min-width: 0;
}

.viewport {
  position: relative;
  flex: 1;
  min-height: 0;
  background: linear-gradient(#333366, #acacc2);
}

.scene {
  display: block;
  width: 100%;
  height: 100%;
}

.axis {
  font: 10px 'DejaVu Sans', sans-serif;
}

.tooltip {
  position: absolute;
  top: 12px;
  right: 62px;
  padding: 1px 5px;
  background: #fff;
  border: 1px solid #767676;
  box-shadow: 3px 3px 3px rgba(0, 0, 0, 0.45);
  color: #575757;
  white-space: nowrap;
}

.doc-tabs {
  display: flex;
  height: 24px;
  padding-left: 2px;
  border-top: 1px solid #a0a0a2;
  font: 11px/16px 'DejaVu Sans Condensed', 'DejaVu Sans', sans-serif;
}

.doc {
  display: flex;
  align-items: center;
  gap: 4px;
  box-sizing: border-box;
  height: 21px;
  padding: 0 12px 0 10px;
  background: #d2d7e3;
}

.doc.selected {
  height: 23px;
  background: #eff0f4;
  border: 1px solid #cdd5e8;
  border-top: 0;
}

.doc button {
  width: 14px;
  height: 14px;
  border: 1px solid #8f9291;
  border-radius: 2px;
  background: #b4b7b6;
}

.doc.selected button {
  border-color: #c8331c;
  background: #dc7a5e;
}

.doc button svg {
  width: 14px;
  height: 14px;
}

.status {
  display: flex;
  align-items: center;
  justify-content: space-between;
  height: 27px;
  padding: 0 19px 0 6px;
}

.taskbar {
  display: flex;
  align-items: center;
  height: 40px;
  background: #10121a;
  color: #fff;
}

.start {
  width: 48px;
  height: 40px;
}

.search {
  display: flex;
  align-items: center;
  box-sizing: border-box;
  width: 344px;
  height: 40px;
  padding: 0 15px 0 11px;
  background: #27292e;
}

.search input {
  flex: 1;
  min-width: 0;
  padding: 0 0 0 11px;
  border: 0;
  outline: 0;
  background: none;
  color: #fff;
  font: 15px/20px Roboto, 'Noto Sans', sans-serif;
}

.search input::placeholder {
  color: #9b9b9d;
  opacity: 1;
}

.taskview {
  width: 49px;
  height: 40px;
}

.app {
  box-sizing: border-box;
  width: 46px;
  height: 38px;
  margin-left: 3px;
  border: 1px solid transparent;
}

.app svg {
  width: 24px;
  height: 24px;
}

.app.open {
  background: #3b3c41;
  border-color: #77787c;
}

.app.stacked {
  border-right-width: 5px;
  border-right-style: double;
}

.app.current {
  background: #77787b;
  border-color: #f0f0f0;
}

.tray {
  display: flex;
  align-items: center;
  margin-left: auto;
  padding-right: 14px;
}

.tray button {
  width: 24px;
  height: 40px;
}

.clock {
  display: flex;
  flex-direction: column;
  align-items: center;
  width: 68px;
  line-height: 19px;
}

.tray .notes {
  position: relative;
  width: 44px;
}

.notes span {
  position: absolute;
  right: 10px;
  bottom: 6px;
  width: 15px;
  font-weight: 700;
  font-size: 12px;
}
</style>
